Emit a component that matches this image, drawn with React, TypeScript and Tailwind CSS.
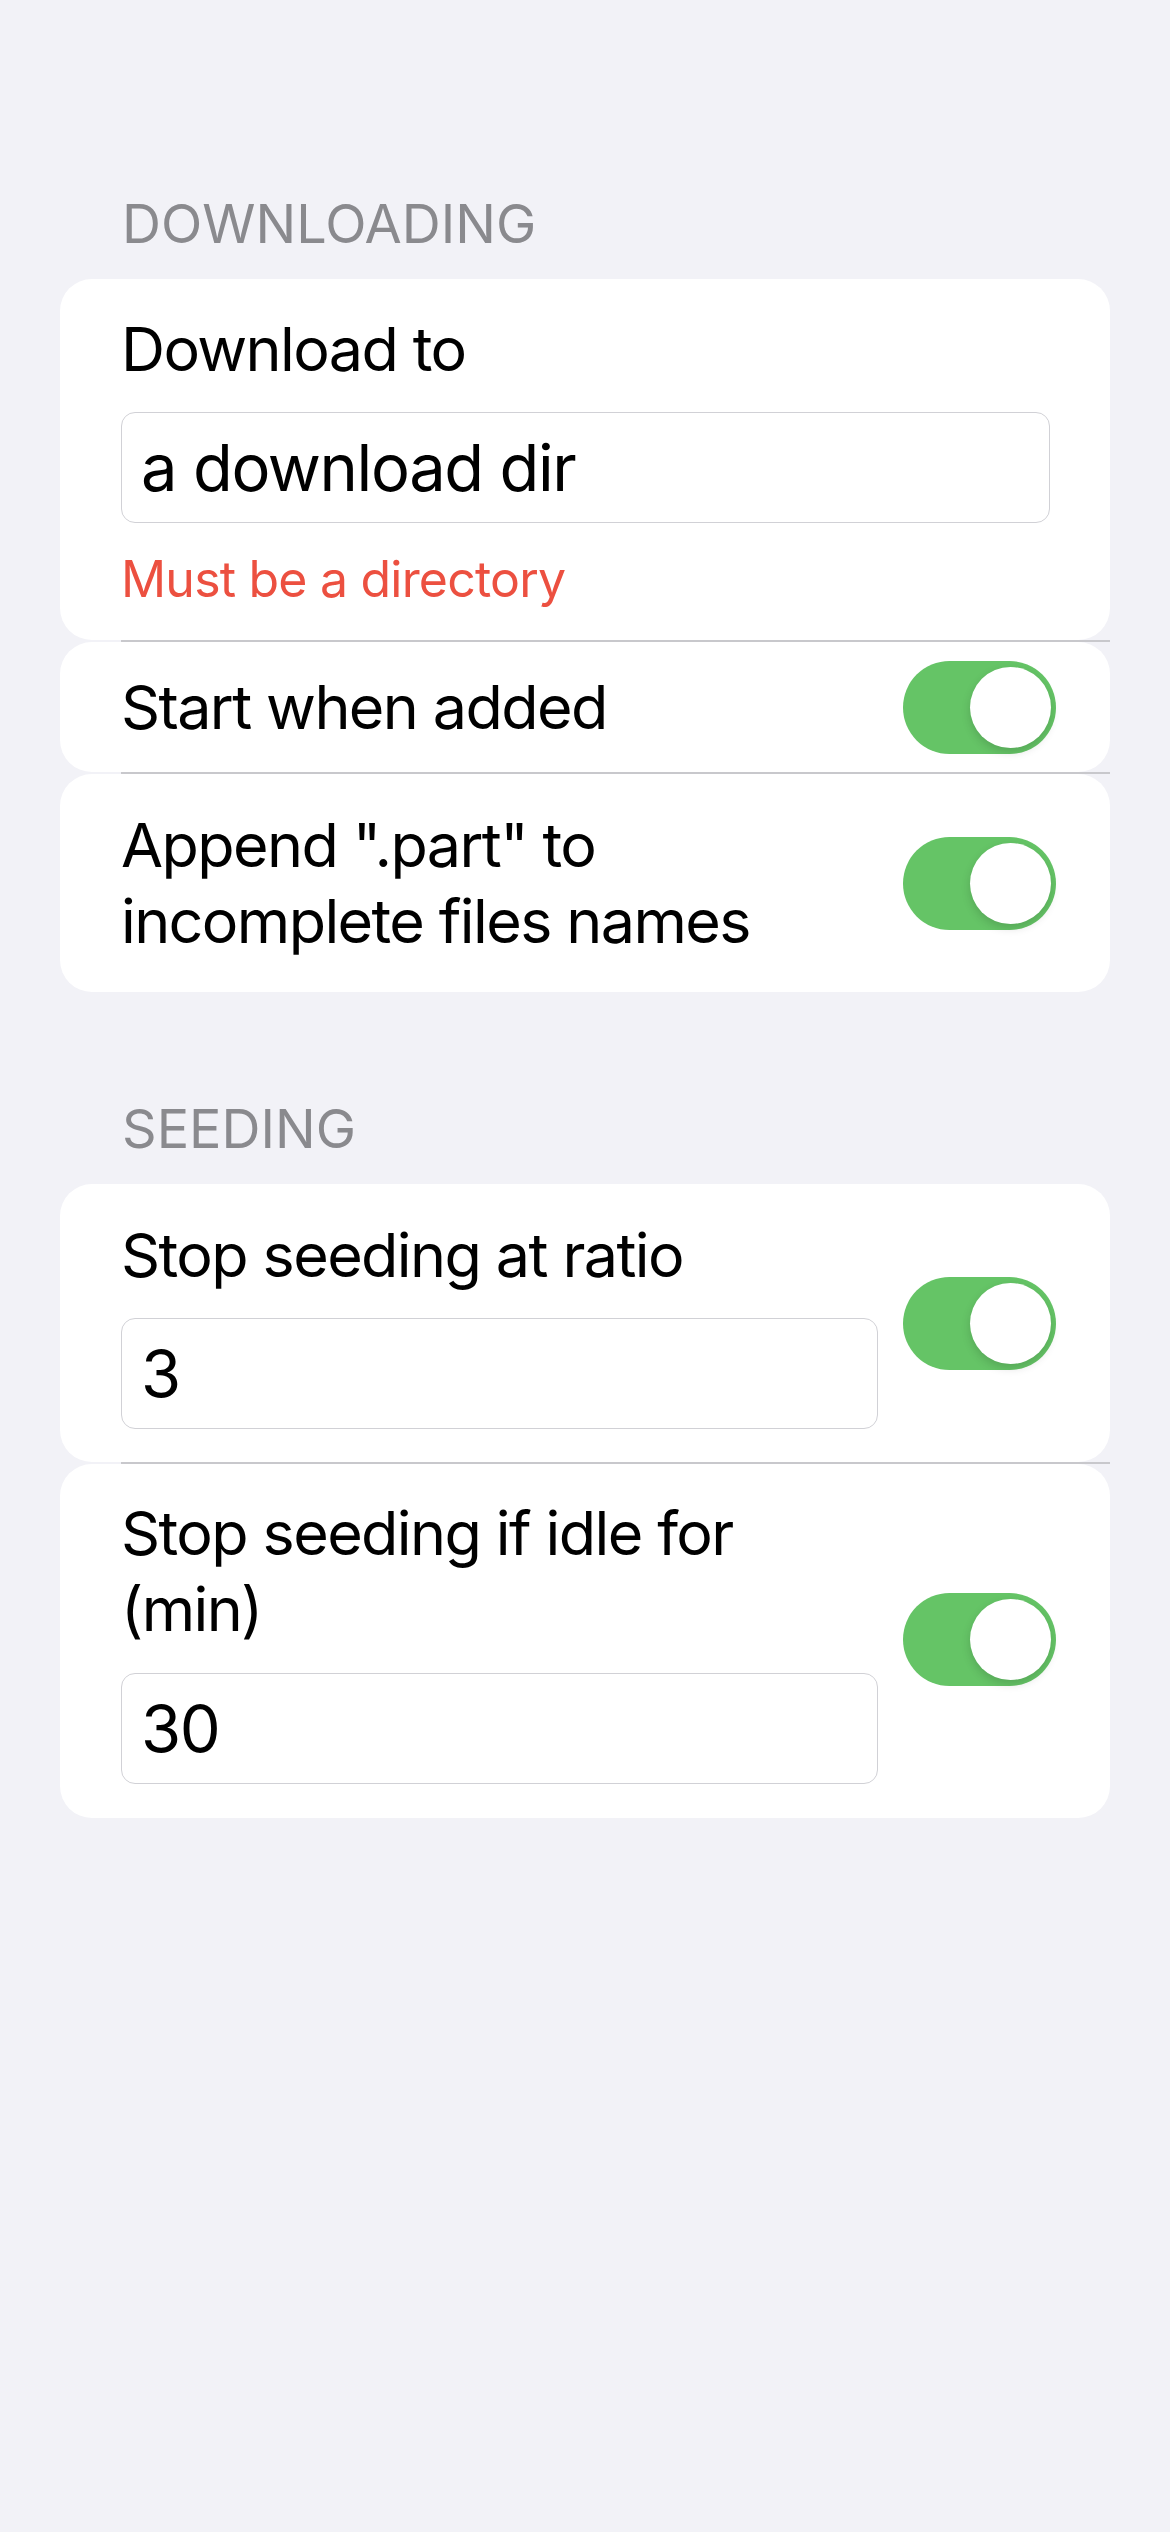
export default function App() {
	return (
		<main className="min-h-screen bg-[#f2f2f7] pb-[200px] pt-[192px] font-['Inter','Noto_Sans',sans-serif] text-black">
			<SectionHeader title="Downloading" />
			<div className="flex flex-col">
				<div className="mx-[60px] flex flex-col rounded-[32px] bg-white pb-[29px] pl-[61px] pr-[60px] pt-[32px]">
					<p className="text-[61px] leading-[76px] tracking-[-1.6px]">Download to</p>
					<TextBox value="a download dir" className="mt-[25px]" />
					<p className="mt-[24px] text-[50px] leading-[64px] tracking-[-0.8px] text-[#ec5040]">Must be a directory</p>
				</div>
				<Separator />
				<div className="mx-[60px] flex h-[130px] items-center justify-between rounded-[32px] bg-white pl-[61px] pr-[54px]">
					<p className="text-[61px] leading-[76px] tracking-[-1.6px]">Start when added</p>
					<Toggle />
				</div>
				<Separator />
				<div className="mx-[60px] flex items-center justify-between rounded-[32px] bg-white py-[33px] pl-[61px] pr-[54px]">
					<p className="text-[61px] leading-[76px] tracking-[-1.6px]">
						Append ".part" to
						<br />
						incomplete files names
					</p>
					<Toggle />
				</div>
			</div>

			<div className="mt-[105px]">
				<SectionHeader title="Seeding" />
			</div>
			<div className="flex flex-col">
				<div className="mx-[60px] flex items-center gap-[25px] rounded-[32px] bg-white pb-[33px] pl-[61px] pr-[54px] pt-[33px]">
					<div className="flex min-w-0 flex-1 flex-col">
						<p className="text-[61px] leading-[76px] tracking-[-1.6px]">Stop seeding at ratio</p>
						<TextBox value="3" className="mt-[25px]" />
					</div>
					<Toggle />
				</div>
				<Separator />
				<div className="mx-[60px] flex items-center gap-[25px] rounded-[32px] bg-white pb-[34px] pl-[61px] pr-[54px] pt-[31px]">
					<div className="flex min-w-0 flex-1 flex-col">
						<p className="text-[61px] leading-[76px] tracking-[-1.6px]">
							Stop seeding if idle for
							<br />
							(min)
						</p>
						<TextBox value="30" className="mt-[26px]" />
					</div>
					<Toggle />
				</div>
			</div>
		</main>
	);
}

function SectionHeader({ title }: { title: string }) {
	return <h2 className="mb-[23px] pl-[122px] text-[54px] uppercase leading-[64px] text-[#8a8a8e]">{title}</h2>;
}

function Separator() {
	return <div className="ml-[121px] mr-[60px] h-[2px] bg-[#c8c8cc]" />;
}

function TextBox({ value, className }: { value: string; className?: string }) {
	return (
		<div className={`flex h-[111px] items-center rounded-[14px] border-[1.5px] border-[#d1d1d6] px-[19px] ${className ?? ""}`}>
			<span className="text-[65px] leading-none tracking-[-1.4px]">{value}</span>
		</div>
	);
}

function Toggle() {
	return (
		<div className="relative h-[93px] w-[153px] shrink-0 rounded-full bg-[#65c466]">
			<span className="absolute right-[5px] top-[6px] h-[81px] w-[81px] rounded-full bg-white shadow-[0_4px_10px_rgba(0,0,0,0.15)]" />
		</div>
	);
}
